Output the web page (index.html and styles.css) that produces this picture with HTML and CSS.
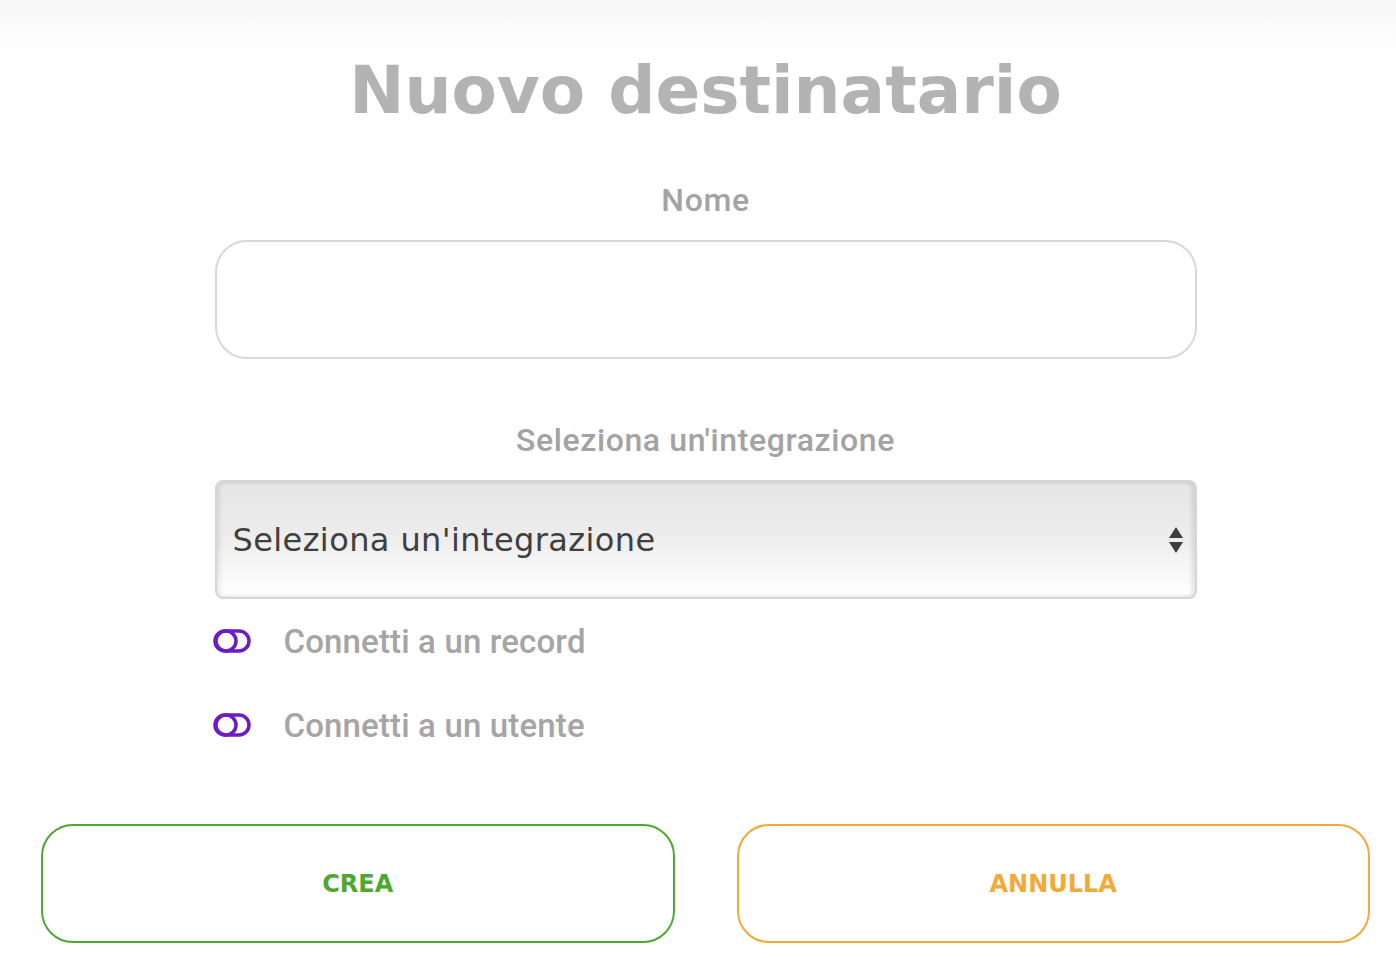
FILE: index.html
```html
<!DOCTYPE html>
<html lang="it">
<head>
    <meta charset="UTF-8">
    <meta name="viewport" content="width=device-width, initial-scale=1.0">
    <title>Nuovo destinatario</title>
    <link rel="stylesheet" href="styles.css">
</head>
<body>
    <div class="page">
        <h1 class="title">Nuovo destinatario</h1>

        <div class="form">
            <label class="field-label" for="nome">Nome</label>
            <input class="text-input" type="text" id="nome">

            <label class="field-label label-select" for="integrazione">Seleziona un'integrazione</label>
            <div class="select-box">
                <span class="select-text">Seleziona un'integrazione</span>
                <span class="select-arrows">
                    <svg width="16" height="28" viewBox="0 0 16 28">
                        <path d="M8 1 L15 12 L1 12 Z" fill="#3d3d3d"/>
                        <path d="M1 16 L15 16 L8 27 Z" fill="#3d3d3d"/>
                    </svg>
                </span>
            </div>

            <div class="toggle-row">
                <svg class="toggle" width="38" height="24" viewBox="0 0 38 24">
                    <rect x="2" y="2" width="34" height="20" rx="10" fill="none" stroke="#6c1bc5" stroke-width="3.5"/>
                    <circle cx="13" cy="12" r="10" fill="none" stroke="#6c1bc5" stroke-width="3.5"/>
                </svg>
                <span class="toggle-text">Connetti a un record</span>
            </div>
            <div class="toggle-row">
                <svg class="toggle" width="38" height="24" viewBox="0 0 38 24">
                    <rect x="2" y="2" width="34" height="20" rx="10" fill="none" stroke="#6c1bc5" stroke-width="3.5"/>
                    <circle cx="13" cy="12" r="10" fill="none" stroke="#6c1bc5" stroke-width="3.5"/>
                </svg>
                <span class="toggle-text">Connetti a un utente</span>
            </div>
        </div>

        <div class="actions">
            <button class="btn btn-create">CREA</button>
            <button class="btn btn-cancel">ANNULLA</button>
        </div>
    </div>
</body>
</html>
```

FILE: styles.css
```css
*{
    padding: 0;
    margin: 0;
    box-sizing: border-box;
}

body{
    background: linear-gradient(#f7f7f7 0px, #ffffff 55px) no-repeat;
    background-color: #fff;
    font-family: Roboto, "Liberation Sans", Arial, sans-serif;
}

.page{
    padding: 51px 26px 0 41px;
    display: flex;
    flex-direction: column;
    align-items: center;
}

.title{
    font-family: "DejaVu Sans", sans-serif;
    font-weight: 700;
    font-size: 66px;
    color: #b3b3b3;
    line-height: 80px;
}

.form{
    width: 982px;
    margin-top: 51px;
    display: flex;
    flex-direction: column;
}

.field-label{
    text-align: center;
    font-size: 32px;
    font-weight: 500;
    letter-spacing: 0.6px;
    color: #a3a3a3;
    line-height: 36px;
    margin-bottom: 22px;
}

.label-select{
    margin-top: 63px;
}

.text-input{
    display: block;
    width: 100%;
    height: 119px;
    border: 2px solid #d8d8d8;
    border-radius: 32px;
    background: #fff;
    outline: none;
}

.select-box{
    height: 119px;
    border: 2px solid #d6d6d6;
    border-radius: 8px;
    background: linear-gradient(#e6e6e6 0%, #ececec 45%, #ffffff 100%);
    box-shadow: inset 3px 0 4px rgba(0,0,0,0.08), inset -3px 0 4px rgba(0,0,0,0.10);
    display: flex;
    align-items: center;
    justify-content: space-between;
    padding: 0 11px 0 16px;
}

.select-text{
    font-family: "DejaVu Sans", sans-serif;
    font-size: 32px;
    color: #3f3f3f;
    letter-spacing: 0.4px;
}

.select-arrows{
    display: flex;
}

.toggle-row{
    display: flex;
    align-items: center;
    height: 84px;
}

.toggle{
    margin-left: -2px;
    margin-right: 33px;
}

.toggle-text{
    font-size: 33px;
    font-weight: 500;
    letter-spacing: 0.15px;
    color: #a5a5a5;
}

.actions{
    width: 100%;
    display: flex;
    gap: 62px;
    margin-top: 57px;
}

.btn{
    flex: 1;
    height: 119px;
    background: #fff;
    border-radius: 32px;
    font-family: "DejaVu Sans", sans-serif;
    font-weight: 700;
    font-size: 24px;
    cursor: pointer;
}

.btn-create{
    border: 2px solid #4fa72f;
    color: #4fa72f;
}

.btn-cancel{
    border: 2px solid #f1aa36;
    color: #f1aa36;
}
```
